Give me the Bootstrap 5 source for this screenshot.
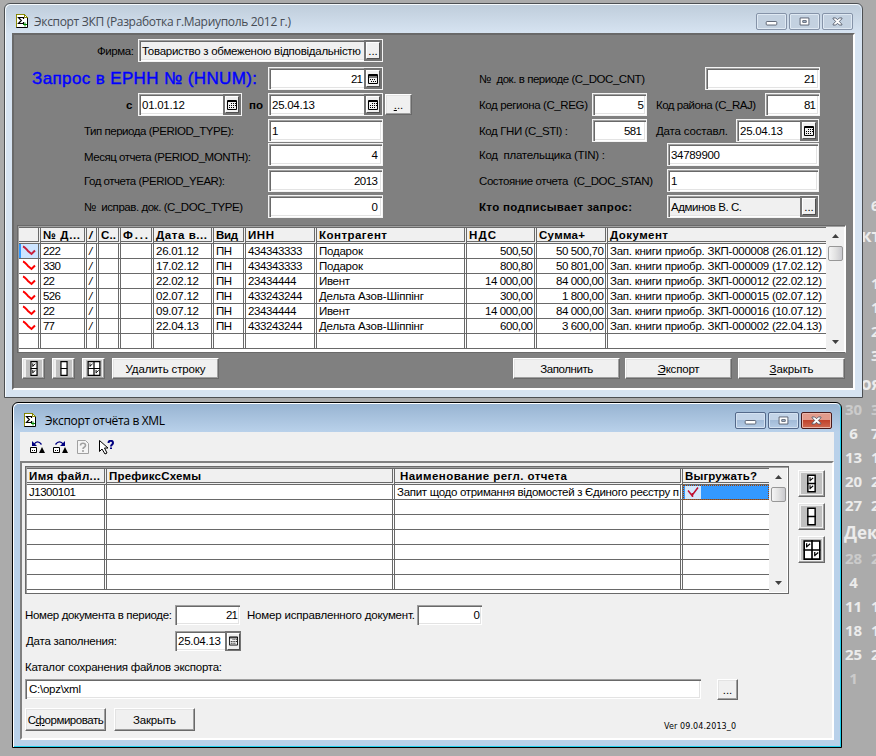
<!DOCTYPE html>
<html lang="ru">
<head>
<meta charset="utf-8">
<title>Экспорт ЗКП</title>
<link href="https://cdn.jsdelivr.net/npm/bootstrap@5.3.0/dist/css/bootstrap.min.css" rel="stylesheet">
<style>
body{width:876px;height:756px;overflow:hidden;background:#ababab;color:#000;font:11.5px/14px "Liberation Sans",sans-serif;position:relative}
svg{display:block;flex:none}
.t{white-space:pre;display:inline-block}
.win{position:absolute}
.w1{left:4px;top:3px;width:859px;height:395px;border:1px solid #4c4f52;border-radius:6px 6px 0 0;background:#d7e4f2;box-shadow:inset 1px 1px #f6fafd}
.w2{left:12px;top:402px;width:830px;height:346px;border:1px solid #000;border-radius:6px 6px 0 0;background:#b9d1ea;box-shadow:inset 1px 1px #fff,inset -1px -1px #22d0ee}
.cap{font:12px/16px "Open Sans","Noto Sans",sans-serif}
.w1 .cap{height:29px;padding:0 8px 0 10px;background:linear-gradient(#bfcddb,#d7e4f2);border-radius:5px 5px 0 0;margin:1px 1px -1px 1px;color:#464c55}
.w2 .cap{height:28px;padding:0 8px 0 9px;background:linear-gradient(#98b4d2,#b9d1ea);border-radius:5px 5px 0 0;margin:1px 1px 0 1px}
.wb{width:31px;height:17px;border:1px solid #8593a8;border-radius:2px;box-shadow:inset 0 0 0 1px #dfe9f3;background:#c3d1e0}
.w2 .wb{border-color:#54698a;background:linear-gradient(#c3d4e8 45%,#a2bbd8 50%,#b5cce6);box-shadow:inset 0 0 0 1px #d4e2f2}
.w2 .wb.red{border-color:#4a1a1a;background:linear-gradient(#e29b8c 45%,#c1432c 50%,#cf6a52);box-shadow:inset 0 0 0 1px #eab5a8}
.cl1{margin-left:7px;width:843px;height:357px;background:#808080;border:2px solid;border-color:#696969 #fff #fff #696969}
.cl2{margin-left:7px;width:814px;height:308px;background:#f0f0f0}
.half-l{width:451px;padding-top:4px}
.half-r{padding:32px 0 0 14px}
.ln{height:23px}
.g1{margin-top:1px}.g3{margin-top:3px}.g5{margin-top:5px}
.fld{height:23px;background:#fff;border:1px solid #f4f4f4;box-shadow:inset 1px 1px #a0a0a0,inset 2px 2px #696969,inset -1px -1px #fff,inset -2px -2px #e3e3e3;padding:0 4px 0 3px;display:flex;align-items:center;flex:none;overflow:hidden}
.num{justify-content:flex-end}
.fld.pk{padding-right:1px;justify-content:space-between}
.fld.pk.num .t{margin-left:auto}
.fld.gr{background:#f0f0f0}
.flat{height:20px;border:0;padding-left:4px}
.pb{width:14px;height:17px;flex:none;border:1px solid;border-color:#fff #505050 #505050 #fff;background:#f0f0f0;box-shadow:0 0 0 2px #747474;display:flex;align-items:center;justify-content:center;margin:0 1px 0 3px}
.bt{height:21px;border:1px solid;border-color:#fff #696969 #696969 #fff;background:#f0f0f0;box-shadow:inset -1px -1px #a0a0a0,inset 1px 1px #e3e3e3;display:flex;align-items:center;justify-content:center;flex:none}
.bt.h22{height:23px}
.ib{width:23px}.ib i{background:#c0c0c0;width:16px;height:17px;display:flex;align-items:center;justify-content:center}
.sb{width:27px;height:27px}.sb i{background:#c0c0c0;width:21px;height:21px;display:flex;align-items:center;justify-content:center}
.grd{height:128px;border:1px solid;border-color:#696969 #fff #696969 #696969;box-shadow:inset 1px 1px #a0a0a0,inset -1px -1px #fff;padding:1px;display:flex;background:#fff;flex:none}
.grd table{table-layout:fixed;border-collapse:separate;border-spacing:0;height:122px}
.grd th,.grd td{padding:0 2px;border-right:3px double #696969;white-space:nowrap;overflow:hidden;line-height:13px;vertical-align:middle}
.grd th{height:17px;background:#f0f0f0;border-bottom:3px double #696969;border-top:1px solid #696969;font-size:11.5px;line-height:12px}
.grd td{height:15px;border-bottom:1px solid #696969}
.grd tr>:last-child{border-right:0}
.grd td.n{text-align:right;padding-right:1px}
.grd .mk{padding:0}.grd .on{background:#cce4ff;box-shadow:inset 2px 0 #3399ff}
.scr{background:#f0f0f0;flex:1;display:flex;flex-direction:column;align-items:center;padding:7px 0 7px}
.thumb{width:15px;height:15px;border:1px solid #979797;border-radius:2px;background:linear-gradient(90deg,#f5f5f5,#e2e2e2 50%,#c9c9ce);margin:8px 0 auto;flex:none}
.sel{background:#3399ff;outline:1px dotted #a04000;outline-offset:-1px}
.sel svg{background:#d5e8fb}
.pnl{border-left:2px solid #808080;border-top:2px solid;border-top-color:#808080;border-right:2px solid #fff;border-bottom:2px solid #fff;height:279px;padding:3px 0 0 3px}
.cal{position:absolute;left:842px;top:0;width:34px;color:#ececec;font:bold 15px/24px "Open Sans","Noto Sans",sans-serif;overflow:hidden;height:756px}
.cal .cr{display:grid;grid-template-columns:23px 20px;gap:6px;width:49px;height:24px;text-align:center}
.cal .cr>:last-child{text-align:left}
.cal .dim{color:#cbcbcb}
.cal .mo{height:26px;line-height:26px;font-size:17px;white-space:nowrap;text-align:left}
.hd{font-size:17px;line-height:20px;color:#00f;-webkit-text-stroke:.4px #00f}
</style>
<script src="https://cdn.jsdelivr.net/npm/bootstrap@5.3.0/dist/js/bootstrap.bundle.min.js"></script>
</head>
<body>
<svg width="0" height="0" class="position-absolute">
 <symbol id="doc" viewBox="0 0 12 14"><path d="M.5.5h8l3 3v10H.5z" fill="#fff" stroke="#000"/><path d="M.5 13V.5h8l3 3" fill="none" stroke="#8a8a00"/><path d="M8.500.5v3h3" fill="none" stroke="#8a8a00"/><path d="M7.500 5V3.500h-5l2.800 3-2.800 3h5V8" fill="none" stroke="#000" stroke-width="1.200"/><path d="M9 8.500v4M7 10.500h4" stroke="#080"/></symbol>
 <symbol id="calc" viewBox="0 0 10 10"><path d="M.5.5h9v9h-9zM0 3h10M0 1.500h10" fill="none" stroke="#000"/><path d="M2 5h1v1H2zm2 0h1v1H4zm2 0h1v1H6zM3 7h1v1H3zm2 0h1v1H5zm2 0h1v1H7z"/></symbol>
 <symbol id="cln" viewBox="0 0 10 10"><path d="M.5.5h9v9h-9zM0 1.500h10" fill="none" stroke="#000"/><path d="M4 3h1v1H4zm2 0h1v1H6zm2 0h1v1H8zM2 5h1v1H2zm2 0h1v1H4zm2 0h1v1H6zm2 0h1v1H8zM2 7h1v1H2zm2 0h1v1H4zm2 0h1v1H6z"/></symbol>
 <symbol id="chk" viewBox="0 0 20 14"><path d="M4 2.500c2 .5 3 2.500 5 4.500l3.500 3 3.500-3.500" fill="none" stroke="currentColor" stroke-width="2"/></symbol>
 <symbol id="two" viewBox="0 0 8 16"><path d="M.75.75h6.500v14.500H.75zM0 8h8" fill="#fff" stroke="#000" stroke-width="1.300"/></symbol>
 <symbol id="twoc" viewBox="0 0 8 16"><path d="M.75.75h6.500v14.500H.75zM0 8h8" fill="#fff" stroke="#000" stroke-width="1.300"/><path d="M2.700 2.500v3.500M2.700 5.500L5.500 3M2.700 9.500V13M2.700 12.500l2.800-2.500" fill="none" stroke="#000"/></symbol>
 <symbol id="four" viewBox="0 0 14 16"><path d="M.75.75h12.500v14.500H.75zM0 8h14M7 0v16" fill="#fff" stroke="#000" stroke-width="1.300"/><path d="M2.700 2.500v3.500M2.700 5.500L5.500 3M9.200 9.500V13M9.200 12.500l2.800-2.500" fill="none" stroke="#000"/></symbol>
 <symbol id="mn" viewBox="0 0 31 17"><rect x="9.500" y="8.500" width="12" height="4" rx="1" fill="#fff" stroke="#505868"/></symbol>
 <symbol id="mx" viewBox="0 0 31 17"><path d="M10.500 4.500h10v8h-10z" fill="#fff" stroke="#505868"/><path d="M13.500 7.500h4v2h-4z" fill="#b8cae0" stroke="#505868"/></symbol>
 <symbol id="cx" viewBox="0 0 31 17"><path d="M10.500 4.500h3l2 2 2-2h3v1L17.500 8.500l3 3v1h-3l-2-2-2 2h-3v-1l3-3-3-3z" fill="#fff" stroke="#505868"/></symbol>
 <symbol id="up" viewBox="0 0 7 4"><path d="M3.500 0L7 4H0z" fill="#404040"/></symbol>
 <symbol id="dn" viewBox="0 0 7 4"><path d="M3.500 4L7 0H0z" fill="#404040"/></symbol>
</svg>

<div class="cal">
 <div style="height:193px"></div>
 <div class="cr"><span></span><span>6</span></div>
 <div class="mo" style="height:54px;padding:6px 0 0 19px">кт</div>
 <div class="cr"><span></span><span>1</span></div><div class="cr"><span></span><span>1</span></div><div class="cr"><span></span><span>2</span></div><div class="cr"><span></span><span>3</span></div>
 <div class="mo" style="height:30px;padding:4px 0 0 19px">оя</div>
 <div class="cr dim"><span>30</span><span>31</span></div><div class="cr"><span>6</span><span>7</span></div><div class="cr"><span>13</span><span>14</span></div><div class="cr"><span>20</span><span>21</span></div><div class="cr"><span>27</span><span>28</span></div>
 <div class="mo" style="height:29px;padding:3px 0 0 2px">Дек</div>
 <div class="cr dim"><span>28</span><span>29</span></div><div class="cr"><span>4</span><span></span></div><div class="cr"><span>11</span><span>12</span></div><div class="cr"><span>18</span><span>19</span></div><div class="cr"><span>25</span><span>26</span></div><div class="cr dim"><span>1</span><span></span></div>
</div>

<section class="win w1">
 <div class="cap d-flex align-items-start">
  <svg width="12" height="14" style="margin-top:9px"><use href="#doc"/></svg>
  <span class="t" data-w="257" style="margin:9px auto 0 6px">Экспорт ЗКП (Разработка г.Мариуполь 2012 г.)</span>
  <div class="d-flex" style="gap:2px;margin-top:8px"><div class="wb"><svg width="29" height="15"><use href="#mn"/></svg></div><div class="wb"><svg width="29" height="15"><use href="#mx"/></svg></div><div class="wb"><svg width="29" height="15"><use href="#cx"/></svg></div></div>
 </div>
 <div class="cl1">
  <div class="d-flex" style="height:190px">
   <div class="half-l">
    <div class="ln d-flex align-items-center"><span style="width:124px;padding-left:83px"><span class="t" data-w="37">Фирма:</span></span><div class="fld pk gr" style="width:245px"><span class="t" data-w="219">Товариство з обмеженою відповідальністю</span><span class="pb">...</span></div></div>
    <div class="ln g5 d-flex align-items-center"><span style="width:254px;padding-left:18px"><span class="t hd" data-w="225">Запрос в ЕРНН № (HNUM):</span></span><div class="fld pk num" style="width:115px"><span class="t" data-w="12">21</span><span class="pb"><svg width="10" height="10"><use href="#calc"/></svg></span></div></div>
    <div class="ln g3 d-flex align-items-center"><b style="width:124px;padding-left:112px">с</b><div class="fld pk" style="width:104px"><span class="t" data-w="43">01.01.12</span><span class="pb"><svg width="10" height="10"><use href="#cln"/></svg></span></div><b style="width:26px;padding-left:7px"><span class="t" data-w="14">по</span></b><div class="fld pk" style="width:115px"><span class="t" data-w="43">25.04.13</span><span class="pb"><svg width="10" height="10"><use href="#cln"/></svg></span></div><div class="bt" style="width:27px;margin-left:2px"><u>.</u>..</div></div>
    <div class="ln g3 d-flex align-items-center"><span style="width:254px;padding-left:70px"><span class="t" data-w="150">Тип периода (PERIOD_TYPE):</span></span><div class="fld" style="width:115px">1</div></div>
    <div class="ln g1 d-flex align-items-center"><span style="width:254px;padding:4px 0 0 70px"><span class="t" data-w="167">Месяц отчета (PERIOD_MONTH):</span></span><div class="fld num" style="width:115px">4</div></div>
    <div class="ln g3 d-flex align-items-center"><span style="width:254px;padding-left:70px"><span class="t" data-w="141">Год отчета (PERIOD_YEAR):</span></span><div class="fld num" style="width:115px"><span class="t" data-w="24">2013</span></div></div>
    <div class="ln g3 d-flex align-items-center"><span style="width:254px;padding-left:70px"><span class="t" data-w="159">№  исправ. док. (C_DOC_TYPE)</span></span><div class="fld num" style="width:115px">0</div></div>
   </div>
   <div class="half-r">
    <div class="ln d-flex align-items-center"><span style="width:226px"><span class="t" data-w="166">№  док. в периоде (C_DOC_CNT)</span></span><div class="fld num" style="width:115px;padding-right:3px"><span class="t" data-w="12">21</span></div></div>
    <div class="ln g3 d-flex align-items-center"><span style="width:113px"><span class="t" data-w="109">Код региона (C_REG)</span></span><div class="fld num" style="width:55px;padding-right:2px">5</div><span style="width:118px;padding-left:9px"><span class="t" data-w="100">Код района (C_RAJ)</span></span><div class="fld num" style="width:55px;padding-right:3px"><span class="t" data-w="12">81</span></div></div>
    <div class="ln g3 d-flex align-items-center"><span style="width:113px"><span class="t" data-w="89">Код ГНИ (C_STI) :</span></span><div class="fld num" style="width:55px"><span class="t" data-w="18">581</span></div><span style="width:89px;padding-left:9px"><span class="t" data-w="72">Дата составл.</span></span><div class="fld pk" style="width:83px"><span class="t" data-w="43">25.04.13</span><span class="pb"><svg width="10" height="10"><use href="#cln"/></svg></span></div></div>
    <div class="ln g1 d-flex align-items-center"><span style="width:188px"><span class="t" data-w="126">Код  плательщика (TIN) :</span></span><div class="fld" style="width:152px"><span class="t" data-w="49">34789900</span></div></div>
    <div class="ln g3 d-flex align-items-center"><span style="width:188px"><span class="t" data-w="174">Состояние отчета  (C_DOC_STAN)</span></span><div class="fld" style="width:152px">1</div></div>
    <div class="ln g3 d-flex align-items-center"><b style="width:188px"><span class="t" data-w="153">Кто подписывает запрос:</span></b><div class="fld pk gr" style="width:152px"><span class="t" data-w="71">Админов В. С.</span><span class="pb">...</span></div></div>
   </div>
  </div>
  <div class="grd" style="width:829px;margin-left:3px">
   <table style="width:807px"><colgroup><col style="width:22px"><col style="width:46px"><col style="width:12px"><col style="width:22px"><col style="width:33px"><col style="width:60px"><col style="width:32px"><col style="width:71px"><col style="width:150px"><col style="width:70px"><col style="width:71px"><col style="width:218px"></colgroup>
   <thead><tr><th></th><th><span class="t" data-w="37">№ Д...</span></th><th><i>/</i></th><th><span class="t" data-w="15">С..</span></th><th><span class="t" data-w="25">Ф...</span></th><th><span class="t" data-w="51">Дата в...</span></th><th><span class="t" data-w="22">Вид</span></th><th><span class="t" data-w="26">ИНН</span></th><th><span class="t" data-w="68">Контрагент</span></th><th><span class="t" data-w="27">НДС</span></th><th><span class="t" data-w="46">Сумма+</span></th><th><span class="t" data-w="58">Документ</span></th></tr></thead>
   <tbody id="rows"></tbody></table>
   <div class="scr"><svg width="7" height="4"><use href="#up"/></svg><div class="thumb"></div><svg width="7" height="4"><use href="#dn"/></svg></div>
  </div>
  <div class="d-flex" style="padding:5px 0 0 8px">
   <div class="bt ib"><i><svg width="8" height="15"><use href="#twoc"/></svg></i></div>
   <div class="bt ib" style="margin-left:7px"><i><svg width="8" height="15"><use href="#two"/></svg></i></div>
   <div class="bt ib" style="margin-left:7px"><i><svg width="14" height="15"><use href="#four"/></svg></i></div>
   <div class="bt" style="width:107px;margin-left:7px"><span class="t" data-w="80">Удалить строку</span></div>
   <div class="bt ms-auto" style="width:107px"><span class="t" data-w="53">Заполнить</span></div>
   <div class="bt" style="width:107px;margin-left:5px"><span class="t" data-w="42"><u>Э</u>кспорт</span></div>
   <div class="bt" style="width:107px;margin:0 8px 0 6px"><span class="t" data-w="44"><u>З</u>акрыть</span></div>
  </div>
 </div>
</section>

<section class="win w2">
 <div class="cap d-flex align-items-start">
  <svg width="12" height="14" style="margin:9px 0 0 1px"><use href="#doc"/></svg>
  <span class="t" data-w="120" style="margin:9px auto 0 9px">Экспорт отчёта в XML</span>
  <div class="d-flex" style="gap:2px;margin-top:8px"><div class="wb"><svg width="29" height="15"><use href="#mn"/></svg></div><div class="wb"><svg width="29" height="15"><use href="#mx"/></svg></div><div class="wb red"><svg width="29" height="15"><use href="#cx"/></svg></div></div>
 </div>
 <div class="cl2">
  <div class="d-flex" style="height:29px;padding:8px 0 0 10px">
   <svg width="15" height="15" viewBox="0 0 15 15"><path d="M.5 7.500h6v5h-6z" fill="#fff" stroke="#000"/><path d="M2 10h1v1H2zm2 0h1v1H4zM9 13l3-6 3 6z"/><path d="M4 4.500C6 1 9 1 11.500 4.500" fill="none" stroke="#000080" stroke-width="1.300"/><path d="M2 1v5h5z" fill="#000080"/></svg>
   <svg width="15" height="15" viewBox="0 0 15 15" style="margin-left:8px"><path d="M.5 7.500h6v5h-6z" fill="#fff" stroke="#000"/><path d="M2 10h1v1H2zm2 0h1v1H4zM9 13l3-6 3 6z"/><path d="M2.500 4.500C5 1 8 1 10.500 4.500" fill="none" stroke="#000080" stroke-width="1.300"/><path d="M12 1v5H7z" fill="#000080"/></svg>
   <svg width="13" height="15" viewBox="0 0 13 15" style="margin-left:9px"><path d="M.5.5h8l3 3v10H.5z" fill="#f4f4f4" stroke="#a0a0a0"/><path d="M3.500 5.500c0-3 5-3 5 0 0 2-2.500 1.500-2.500 3.500M6 10v2" fill="none" stroke="#a0a0a0" stroke-width="1.600"/></svg>
   <svg width="15" height="15" viewBox="0 0 15 15" style="margin-left:9px"><path d="M.5.5v11l2.500-2.500 3 5 2-1-2.500-5H9z" fill="#fff" stroke="#000"/><path d="M9.500 3c0-3 4.500-3 4.500 0 0 1.500-2 1.500-2 3.500M12 7.500V9" fill="none" stroke="#000080" stroke-width="2"/></svg>
  </div>
  <div class="pnl">
   <div class="d-flex">
    <div class="grd" style="width:764px;border-right-color:#696969">
     <table style="width:742px"><colgroup><col style="width:80px"><col style="width:288px"><col style="width:288px"><col style="width:86px"></colgroup>
     <thead><tr><th><span class="t" data-w="71">Имя файл...</span></th><th><span class="t" data-w="92">ПрефиксСхемы</span></th><th style="padding-left:5px"><span class="t" data-w="167">Наименование регл. отчета</span></th><th><span class="t" data-w="72">Выгружать?</span></th></tr></thead>
     <tbody><tr><td><span class="t" data-w="47">J1300101</span></td><td></td><td><span class="t" data-w="282">Запит щодо отримання відомостей з Єдиного реєстру п</span></td><td class="sel"><svg width="16" height="13" viewBox="0 0 16 13"><path d="M3 4.500l4 5 6-8M7.500 11V7" fill="none" stroke="#c01030" stroke-width="1.500"/></svg></td></tr>
     <tr><td></td><td></td><td></td><td></td></tr><tr><td></td><td></td><td></td><td></td></tr><tr><td></td><td></td><td></td><td></td></tr><tr><td></td><td></td><td></td><td></td></tr><tr><td></td><td></td><td></td><td></td></tr><tr><td></td><td></td><td></td><td></td></tr></tbody></table>
     <div class="scr"><svg width="7" height="4"><use href="#up"/></svg><div class="thumb"></div><svg width="7" height="4"><use href="#dn"/></svg></div>
    </div>
    <div class="d-flex flex-column" style="gap:6px;padding:4px 0 0 9px"><div class="bt sb"><i><svg width="9" height="19"><use href="#twoc"/></svg></i></div><div class="bt sb"><i><svg width="9" height="19"><use href="#two"/></svg></i></div><div class="bt sb"><i><svg width="18" height="20"><use href="#four"/></svg></i></div></div>
   </div>
   <div class="d-flex align-items-center" style="margin-top:11px"><span style="width:150px"><span class="t" data-w="147">Номер документа в периоде:</span></span><div class="fld flat num" style="width:65px;padding-right:2px"><span class="t" data-w="12">21</span></div><span style="width:177px;padding-left:7px"><span class="t" data-w="168">Номер исправленного документ.</span></span><div class="fld flat num" style="width:65px;padding-right:2px">0</div></div>
   <div class="d-flex align-items-center" style="margin-top:6px"><span style="width:150px;padding-left:1px"><span class="t" data-w="91">Дата заполнения:</span></span><div class="fld flat pk" style="width:66px;padding:0 0 0 3px"><span class="t" data-w="43">25.04.13</span><span class="pb" style="width:13px;margin-right:1px"><svg width="9" height="10"><use href="#cln"/></svg></span></div></div>
   <div style="margin-top:9px;height:14px"><span class="t" data-w="197">Каталог сохранения файлов экспорта:</span></div>
   <div class="d-flex" style="margin-top:5px"><div class="fld flat" style="width:676px"><span class="t" data-w="52">C:\opz\xml</span></div><div class="bt" style="width:21px;margin-left:16px">...</div></div>
   <div class="d-flex align-items-start" style="margin-top:8px"><div class="bt h22" style="width:81px"><span class="t" data-w="76">С<u>ф</u>ормировать</span></div><div class="bt h22" style="width:81px;margin-left:8px"><span class="t" data-w="43">Закрыть</span></div><span style="margin:13px 0 0 469px;font:8px/12px 'DejaVu Sans',sans-serif"><span class="t" data-w="72">Ver 09.04.2013_0</span></span></div>
  </div>
 </div>
</section>

<script>
const data=[["222","26.01.12","434343333","Подарок","500,50","50 500,70","000008 (26.01.12)"],["330","17.02.12","434343333","Подарок","800,80","50 801,00","000009 (17.02.12)"],["22","22.02.12","23434444","Ивент","14 000,00","84 000,00","000012 (22.02.12)"],["526","02.07.12","433243244","Дельта Азов-Шіппінг","300,00","1 800,00","000015 (02.07.12)"],["22","09.07.12","23434444","Ивент","14 000,00","84 000,00","000016 (10.07.12)"],["77","22.04.13","433243244","Дельта Азов-Шіппінг","600,00","3 600,00","000002 (22.04.13)"]];
const nameWidth={"Подарок":44,"Ивент":31,"Дельта Азов-Шіппінг":105};
// digits are 6px wide, separators 3px
const numWidth=s=>[...s].reduce((a,c)=>a+(/\d/.test(c)?6:3),0);
const span=(s,w)=>`<span class="t" data-w="${w}">${s}</span>`;
document.getElementById('rows').innerHTML=data.map((r,i)=>`<tr><td class="mk ${i?'':'on'}"><svg width="20" height="14" color="${i?'#f00':'#c8203c'}"><use href="#chk"/></svg></td><td>${span(r[0],numWidth(r[0]))}</td><td><i>/</i></td><td></td><td></td><td>${span(r[1],43)}</td><td>${span('ПН',16)}</td><td>${span(r[2],numWidth(r[2])+.5)}</td><td>${span(r[3],nameWidth[r[3]])}</td><td class="n">${span(r[4],numWidth(r[4]))}</td><td class="n">${span(r[5],numWidth(r[5]))}</td><td>${span('Зап. книги приобр. ЗКП-'+r[6],212)}</td></tr>`).join('')+'<tr>'+'<td></td>'.repeat(12)+'</tr>';
// spread letters so that each label takes its nominal width
document.querySelectorAll('[data-w]').forEach(e=>{
  const n=e.textContent.length-1; if(n<1)return;
  const s=(e.dataset.w-e.getBoundingClientRect().width)/n;
  e.style.letterSpacing=s+'px';
  if(e.parentElement.matches('.num,.n'))e.style.marginRight=-s+'px';
});
</script>
</body>
</html>
